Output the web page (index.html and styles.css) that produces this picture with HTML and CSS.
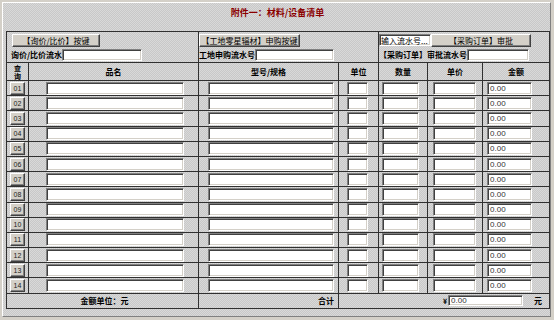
FILE: index.html
```html
<!DOCTYPE html>
<html lang="zh">
<head>
<meta charset="utf-8">
<title>附件一：材料/设备清单</title>
<link rel="stylesheet" href="styles.css">
</head>
<body>
<div class="frame">
  <div class="title">附件一：材料/设备清单</div>
  <table class="grid">
    <colgroup>
      <col class="c-no"><col class="c-name"><col class="c-model"><col class="c-unit"><col class="c-qty"><col class="c-price"><col class="c-amount">
    </colgroup>
    <tr class="tools">
      <td colspan="2" class="tool tool-a">
        <div class="tool-line"><button class="btn btn-a">【询价/比价】按键</button></div>
        <div class="tool-line"><span class="lbl">询价/比价流水</span><input class="in in-a"></div>
      </td>
      <td colspan="2" class="tool tool-b">
        <div class="tool-line"><button class="btn btn-b">【工地零星辐材】申购按键</button></div>
        <div class="tool-line"><span class="lbl">工地申购流水号</span><input class="in in-b"></div>
      </td>
      <td colspan="3" class="tool tool-c">
        <div class="tool-line"><input class="in in-c0" value="输入流水号..."><button class="btn btn-c">【采购订单】审批</button></div>
        <div class="tool-line"><span class="lbl">【采购订单】审批流水号</span><input class="in in-c"></div>
      </td>
    </tr>
    <tr class="head">
      <th class="h-no"><span class="h-no-txt">查</span><span class="h-no-txt">询</span></th><th>品名</th><th>型号/规格</th><th>单位</th><th>数量</th><th>单价</th><th>金额</th>
    </tr>
    <tr class="row"><td class="d-no"><button class="btn-no">01</button></td><td class="d-name"><input class="in in-name"></td><td class="d-model"><input class="in in-model"></td><td class="d-unit"><input class="in in-unit"></td><td class="d-qty"><input class="in in-qty"></td><td class="d-price"><input class="in in-price"></td><td class="d-amount"><input class="in in-amount" value="0.00"></td></tr>
    <tr class="row"><td class="d-no"><button class="btn-no">02</button></td><td class="d-name"><input class="in in-name"></td><td class="d-model"><input class="in in-model"></td><td class="d-unit"><input class="in in-unit"></td><td class="d-qty"><input class="in in-qty"></td><td class="d-price"><input class="in in-price"></td><td class="d-amount"><input class="in in-amount" value="0.00"></td></tr>
    <tr class="row"><td class="d-no"><button class="btn-no">03</button></td><td class="d-name"><input class="in in-name"></td><td class="d-model"><input class="in in-model"></td><td class="d-unit"><input class="in in-unit"></td><td class="d-qty"><input class="in in-qty"></td><td class="d-price"><input class="in in-price"></td><td class="d-amount"><input class="in in-amount" value="0.00"></td></tr>
    <tr class="row"><td class="d-no"><button class="btn-no">04</button></td><td class="d-name"><input class="in in-name"></td><td class="d-model"><input class="in in-model"></td><td class="d-unit"><input class="in in-unit"></td><td class="d-qty"><input class="in in-qty"></td><td class="d-price"><input class="in in-price"></td><td class="d-amount"><input class="in in-amount" value="0.00"></td></tr>
    <tr class="row"><td class="d-no"><button class="btn-no">05</button></td><td class="d-name"><input class="in in-name"></td><td class="d-model"><input class="in in-model"></td><td class="d-unit"><input class="in in-unit"></td><td class="d-qty"><input class="in in-qty"></td><td class="d-price"><input class="in in-price"></td><td class="d-amount"><input class="in in-amount" value="0.00"></td></tr>
    <tr class="row"><td class="d-no"><button class="btn-no">06</button></td><td class="d-name"><input class="in in-name"></td><td class="d-model"><input class="in in-model"></td><td class="d-unit"><input class="in in-unit"></td><td class="d-qty"><input class="in in-qty"></td><td class="d-price"><input class="in in-price"></td><td class="d-amount"><input class="in in-amount" value="0.00"></td></tr>
    <tr class="row"><td class="d-no"><button class="btn-no">07</button></td><td class="d-name"><input class="in in-name"></td><td class="d-model"><input class="in in-model"></td><td class="d-unit"><input class="in in-unit"></td><td class="d-qty"><input class="in in-qty"></td><td class="d-price"><input class="in in-price"></td><td class="d-amount"><input class="in in-amount" value="0.00"></td></tr>
    <tr class="row"><td class="d-no"><button class="btn-no">08</button></td><td class="d-name"><input class="in in-name"></td><td class="d-model"><input class="in in-model"></td><td class="d-unit"><input class="in in-unit"></td><td class="d-qty"><input class="in in-qty"></td><td class="d-price"><input class="in in-price"></td><td class="d-amount"><input class="in in-amount" value="0.00"></td></tr>
    <tr class="row"><td class="d-no"><button class="btn-no">09</button></td><td class="d-name"><input class="in in-name"></td><td class="d-model"><input class="in in-model"></td><td class="d-unit"><input class="in in-unit"></td><td class="d-qty"><input class="in in-qty"></td><td class="d-price"><input class="in in-price"></td><td class="d-amount"><input class="in in-amount" value="0.00"></td></tr>
    <tr class="row"><td class="d-no"><button class="btn-no">10</button></td><td class="d-name"><input class="in in-name"></td><td class="d-model"><input class="in in-model"></td><td class="d-unit"><input class="in in-unit"></td><td class="d-qty"><input class="in in-qty"></td><td class="d-price"><input class="in in-price"></td><td class="d-amount"><input class="in in-amount" value="0.00"></td></tr>
    <tr class="row"><td class="d-no"><button class="btn-no">11</button></td><td class="d-name"><input class="in in-name"></td><td class="d-model"><input class="in in-model"></td><td class="d-unit"><input class="in in-unit"></td><td class="d-qty"><input class="in in-qty"></td><td class="d-price"><input class="in in-price"></td><td class="d-amount"><input class="in in-amount" value="0.00"></td></tr>
    <tr class="row"><td class="d-no"><button class="btn-no">12</button></td><td class="d-name"><input class="in in-name"></td><td class="d-model"><input class="in in-model"></td><td class="d-unit"><input class="in in-unit"></td><td class="d-qty"><input class="in in-qty"></td><td class="d-price"><input class="in in-price"></td><td class="d-amount"><input class="in in-amount" value="0.00"></td></tr>
    <tr class="row"><td class="d-no"><button class="btn-no">13</button></td><td class="d-name"><input class="in in-name"></td><td class="d-model"><input class="in in-model"></td><td class="d-unit"><input class="in in-unit"></td><td class="d-qty"><input class="in in-qty"></td><td class="d-price"><input class="in in-price"></td><td class="d-amount"><input class="in in-amount" value="0.00"></td></tr>
    <tr class="row"><td class="d-no"><button class="btn-no">14</button></td><td class="d-name"><input class="in in-name"></td><td class="d-model"><input class="in in-model"></td><td class="d-unit"><input class="in in-unit"></td><td class="d-qty"><input class="in in-qty"></td><td class="d-price"><input class="in in-price"></td><td class="d-amount"><input class="in in-amount" value="0.00"></td></tr>
    <tr class="foot">
      <td colspan="2" class="f-unit">金额单位：元</td>
      <td class="f-sum">合计</td>
      <td colspan="4" class="f-total"><div class="total-line"><span class="yen">¥</span><input class="in in-total" value="0.00"><span class="yuan">元</span></div></td>
    </tr>
  </table>
</div>
</body>
</html>
```

FILE: styles.css
```css
html, body {
  margin: 0;
  padding: 0;
  background: #d4d0c8;
}

.frame {
  margin: 2px;
  width: 547px;
  height: 313px;
  border: 1px solid;
  border-color: #ffffff #808080 #808080 #ffffff;
  background: repeating-conic-gradient(#c8c8c8 0 25%, #d9d9d9 0 50%) 0 0 / 2px 2px;
  font-family: "Noto Sans CJK SC", "Liberation Sans", sans-serif;
  font-size: 8px;
  color: #000;
}

.title {
  height: 24px;
  padding-top: 4px;
  line-height: 12px;
  text-align: center;
  font-size: 9px;
  font-weight: bold;
  color: #8b0000;
  padding-left: 2px;
}

.grid {
  margin-left: 3px;
  width: 543px;
  table-layout: fixed;
  border-collapse: collapse;
}

.grid td, .grid th {
  border: 1px solid #303030;
  padding: 0;
}

.c-no { width: 22px; }
.c-name { width: 170px; }
.c-model { width: 140px; }
.c-unit { width: 40px; }
.c-qty { width: 49px; }
.c-price { width: 55px; }
.c-amount { width: 67px; }

/* tool row */
.tools { height: 29px; }
.tool {
  vertical-align: top;
  padding-top: 1px !important;
}
.tool-a { padding-left: 4px !important; }
.tool-line {
  display: flex;
  align-items: center;
  height: 14px;
}
.tool-line + .tool-line { margin-top: 1px; }

.lbl {
  font-weight: bold;
  white-space: nowrap;
  line-height: 12px;
  flex-shrink: 0;
}

.btn {
  flex-shrink: 0;
  height: 13px;
  padding: 0;
  margin: 0;
  font-family: "Noto Sans CJK SC", "Liberation Sans", sans-serif;
  font-size: 8px;
  line-height: 11px;
  color: #000;
  background: #d4d0c8;
  border: 1px solid;
  border-color: #ffffff #404040 #404040 #ffffff;
  box-shadow: inset -1px -1px 0 #808080;
  white-space: nowrap;
}
.btn-a { width: 88px; margin-left: 1px; }
.btn-b { width: 101px; }
.btn-c { width: 100px; }

.in {
  flex-shrink: 0;
  box-sizing: border-box;
  height: 13px;
  margin: 0;
  padding: 0 0 0 2px;
  background: #ffffff;
  border: 1px solid;
  border-color: #808080 #ffffff #ffffff #808080;
  box-shadow: inset 1px 1px 0 #404040, inset -1px -1px 0 #d4d0c8;
  font-family: "Liberation Sans", "Noto Sans CJK SC", sans-serif;
  font-size: 8px;
  color: #333;
  outline: none;
}
.in-a { width: 80px; height: 12px; }
.in-b { width: 79px; height: 12px; }
.in-c { width: 62px; height: 12px; }
.in-c0 {
  width: 52px;
  height: 12px;
  font-family: "Noto Sans CJK SC", sans-serif;
  color: #000;
  padding-left: 1px;
}

/* header */
.head { height: 18px; }
.head th {
  font-weight: bold;
  font-size: 8px;
  line-height: 9px;
  text-align: center;
  vertical-align: middle;
}
.h-no-txt {
  display: block;
  font-size: 7px;
  line-height: 8px;
  height: 8px;
  overflow: hidden;
}

/* data rows */
.row { height: 15.2px; }
.row td { vertical-align: middle; }
.d-no { padding-left: 3px !important; }
.btn-no {
  display: block;
  width: 15px;
  height: 13px;
  padding: 0;
  margin: 0;
  background: #d4d0c8;
  border: 1px solid;
  border-color: #ffffff #404040 #404040 #ffffff;
  box-shadow: inset -1px -1px 0 #808080;
  font-family: "Liberation Sans", sans-serif;
  font-size: 7px;
  line-height: 11px;
  color: #222;
}
.d-name { padding-left: 17px !important; }
.d-model { padding-left: 9px !important; }
.d-unit { padding-left: 8px !important; }
.d-qty { padding-left: 3px !important; }
.d-price { padding-left: 5px !important; }
.d-amount { padding-left: 4px !important; }

.in-name { width: 138px; display: block; }
.in-model { width: 126px; display: block; }
.in-unit { width: 21px; display: block; }
.in-qty { width: 37px; display: block; }
.in-price { width: 43px; display: block; }
.in-amount { width: 45px; display: block; }

/* footer */
.foot { height: 15px; }
.foot td {
  font-weight: bold;
  vertical-align: middle;
}
.f-unit { text-align: center; padding-left: 4px !important; }
.f-sum { text-align: right; padding-right: 4px !important; }
.total-line {
  display: flex;
  align-items: center;
  padding-left: 104px;
}
.yen { font-size: 7px; width: 5px; }
.in-total { width: 75px; height: 11px; }
.yuan { margin-left: 11px; }
```
